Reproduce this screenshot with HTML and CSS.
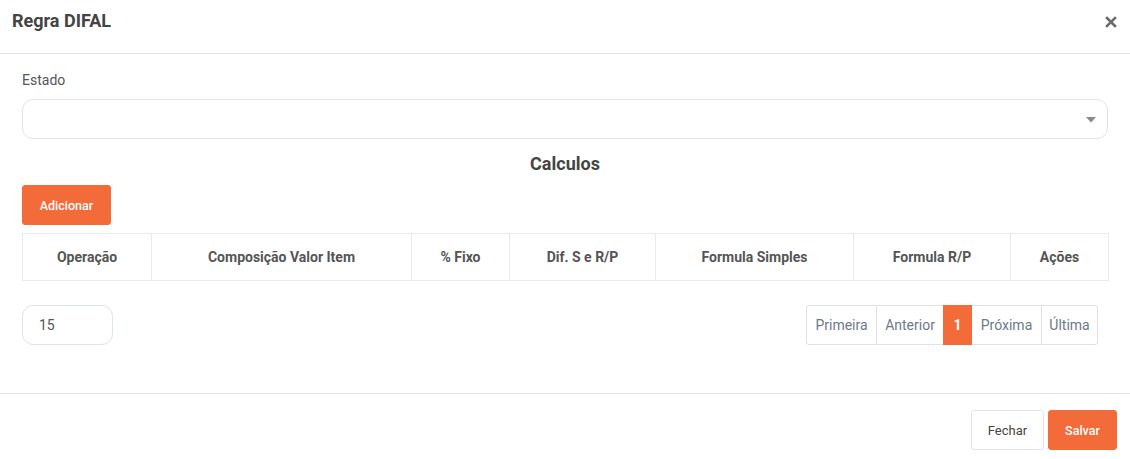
FILE: index.html
```html
<!DOCTYPE html>
<html lang="pt-BR">
<head>
<meta charset="utf-8">
<title>Regra DIFAL</title>
<link rel="stylesheet" href="styles.css">
</head>
<body>
<div class="modal">
  <header class="modal-header">
    <h1 class="modal-title">Regra DIFAL</h1>
    <button class="close" aria-label="Fechar">
      <svg width="12" height="12" viewBox="0 0 12 12"><path d="M2 2 L10 10 M10 2 L2 10" stroke="#6b6b6b" stroke-width="2.6" stroke-linecap="square"/></svg>
    </button>
  </header>
  <main class="modal-body">
    <label class="field-label">Estado</label>
    <div class="select">
      <svg class="caret" width="10" height="6" viewBox="0 0 10 6"><path d="M0 0 H10 L5 5.5 Z" fill="#8a8a8a"/></svg>
    </div>
    <h2 class="section-title">Calculos</h2>
    <div class="actions"><button class="btn btn-primary btn-add">Adicionar</button></div>
    <table class="grid">
      <thead>
        <tr>
          <th class="c1">Operação</th>
          <th class="c2">Composição Valor Item</th>
          <th class="c3">% Fixo</th>
          <th class="c4">Dif. S e R/P</th>
          <th class="c5">Formula Simples</th>
          <th class="c6">Formula R/P</th>
          <th class="c7">Ações</th>
        </tr>
      </thead>
    </table>
    <div class="pager-row">
      <div class="page-size">15</div>
      <nav class="pager">
        <span class="pg pg-first">Primeira</span>
        <span class="pg pg-prev">Anterior</span>
        <span class="pg pg-cur">1</span>
        <span class="pg pg-next">Próxima</span>
        <span class="pg pg-last">Última</span>
      </nav>
    </div>
  </main>
  <footer class="modal-footer">
    <button class="btn btn-light">Fechar</button>
    <button class="btn btn-primary btn-save">Salvar</button>
  </footer>
</div>
</body>
</html>
```
FILE: styles.css
```css
* { box-sizing: border-box; }
html, body { margin: 0; padding: 0; background: #fff; }
body { font-family: Roboto, "Noto Sans", "Liberation Sans", sans-serif; color: #495057; width: 1130px; height: 459px; overflow: hidden; }

.modal { width: 1130px; display: flex; flex-direction: column; }

.modal-header {
  height: 54px;
  border-bottom: 1px solid #e3e6e8;
  display: flex;
  align-items: flex-start;
  justify-content: space-between;
  padding: 10px 13px 0 12px;
}
.modal-title { margin: 0; font-size: 18px; line-height: 22px; font-weight: 700; color: #444; }
.close { border: 0; background: none; padding: 0; display: flex; width: 12px; height: 12px; margin-top: 6px; }

.modal-body { padding: 16px 22px 0 22px; height: 339px; }
.field-label { display: block; font-size: 14px; line-height: 20px; color: #555; }
.select {
  margin-top: 9px;
  height: 40px;
  border: 1px solid #dde6e6;
  border-radius: 11px;
  display: flex;
  align-items: center;
  justify-content: flex-end;
  padding-right: 11px;
}
.caret { display: block; margin-top: 1px; }

.section-title { margin: 10px 0 0; text-align: center; font-size: 18px; font-weight: 700; color: #444; line-height: 29px; }

.actions { margin-top: 7px; display: flex; }
.btn { font-family: inherit; border-radius: 3px; cursor: pointer; }
.btn-primary { background: #f26b38; border: 1px solid #f26b38; color: #fff; font-weight: 500; }
.btn-add { width: 89px; height: 40px; font-size: 12.5px; padding: 0; }

.grid { margin-top: 8px; width: 100%; border-collapse: collapse; table-layout: fixed; }
.grid th {
  height: 47px;
  border: 1px solid #e8eaec;
  font-size: 14px;
  font-weight: 700;
  color: #555;
  text-align: center;
  padding: 0 8px;
}
.c1 { width: 129px; }
.c2 { width: 260px; }
.c3 { width: 98px; }
.c4 { width: 146px; }
.c5 { width: 198px; }
.c6 { width: 157px; }
.c7 { width: 98px; }

.pager-row { margin-top: 24px; display: flex; justify-content: space-between; align-items: center; }
.page-size {
  width: 91px; height: 40px;
  border: 1px solid #dde6e6;
  border-radius: 11px;
  font-size: 14px; color: #555;
  display: flex; align-items: center;
  padding-left: 16px;
}
.pager { display: flex; margin-right: 10px; border: 1px solid #dee2e6; border-radius: 3px; height: 40px; }
.pg { display: flex; align-items: center; justify-content: center; font-size: 14px; color: #6b7a8a; border-left: 1px solid #dee2e6; }
.pg:first-child { border-left: 0; }
.pg-first { width: 69px; }
.pg-prev { width: 67px; }
.pg-cur { width: 29px; background: #f26b38; color: #fff; font-weight: 700; border-left: 0; margin: -1px 0; }
.pg-next { width: 69px; border-left: 0; }
.pg-last { width: 56px; }

.modal-footer {
  border-top: 1px solid #e3e6e8;
  height: 66px;
  display: flex;
  justify-content: flex-end;
  align-items: flex-start;
  gap: 4px;
  padding: 16px 13px 0 0;
}
.btn-light { width: 73px; height: 40px; background: #fff; border: 1px solid #e3e6e8; color: #444; font-size: 13px; padding: 0; }
.btn-save { width: 69px; height: 40px; font-size: 12.5px; padding: 0; }
```
